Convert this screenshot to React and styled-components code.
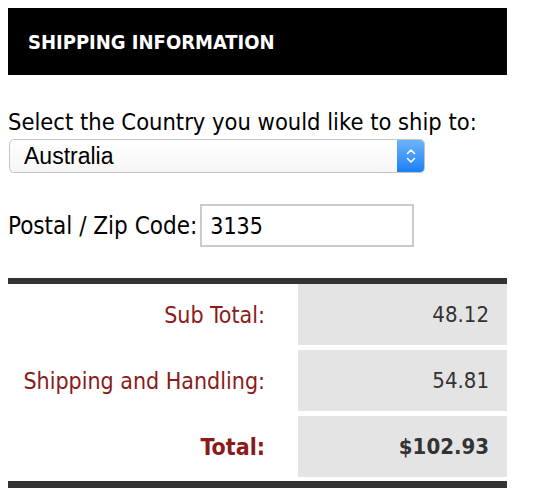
import styled, { createGlobalStyle } from 'styled-components';

const GlobalStyle = createGlobalStyle`
    body {
        margin: 8px;
        background: #fff;
        font-family: "DejaVu Sans Condensed", "DejaVu Sans", sans-serif;
    }
`;

const Panel = styled.div`
    width: 499px;
`;

const Header = styled.div`
    height: 67px;
    background-color: #000;
    color: #fff;
    display: flex;
    align-items: center;
    padding-left: 20px;
    font-size: 20px;
    font-weight: bold;
`;

const Label = styled.div`
    font-size: 23.5px;
    color: #000;
    margin-top: 33px;
    line-height: 28px;
`;

const SelectBox = styled.div`
    display: flex;
    width: 416px;
    height: 34px;
    box-sizing: border-box;
    margin-top: 3px;
    margin-left: 1px;
    border: 1px solid #c4c4c4;
    border-radius: 5px;
    overflow: hidden;
    background: linear-gradient(#fff, #f6f6f6);
`;

const Select = styled.select`
    flex: 1;
    appearance: none;
    border: none;
    background: transparent;
    font-family: "Liberation Sans", Arial, sans-serif;
    font-size: 23px;
    color: #000;
    padding: 0 0 0 14px;
    outline: none;
`;

const Stepper = styled.div`
    width: 27px;
    background: linear-gradient(#6db5fb, #1b7ff6);
    display: flex;
    align-items: center;
    justify-content: center;
`;

const ZipRow = styled.div`
    display: flex;
    align-items: center;
    margin-top: 31px;
    gap: 3px;
    font-size: 24px;
`;

const ZipInput = styled.input`
    width: 214px;
    height: 43px;
    box-sizing: border-box;
    border: 2px solid #cbcbcb;
    padding: 0 8px;
    font-family: inherit;
    font-size: 23px;
    color: #000;
    outline: none;
`;

const Totals = styled.div`
    margin-top: 31px;
    border-top: 6px solid #333;
    border-bottom: 7px solid #333;
    padding-bottom: 4px;
    display: grid;
    grid-template-columns: 290px 209px;
    row-gap: 5px;
`;

const Name = styled.div`
    height: 61px;
    display: flex;
    align-items: center;
    justify-content: flex-end;
    padding-right: 33px;
    color: #8b1a1a;
    font-size: 23px;
    font-weight: ${p => (p.$bold ? 'bold' : 'normal')};
`;

const Amount = styled.div`
    height: 61px;
    display: flex;
    align-items: center;
    justify-content: flex-end;
    padding-right: 18px;
    background-color: #e4e4e4;
    color: #333;
    font-size: 22px;
    font-weight: ${p => (p.$bold ? 'bold' : 'normal')};
`;

const rows = [
    { name: 'Sub Total:', value: '48.12' },
    { name: 'Shipping and Handling:', value: '54.81' },
    { name: 'Total:', value: '$102.93', bold: true },
];

const App = () => {
    return (
        <Panel>
            <GlobalStyle />
            <Header>SHIPPING INFORMATION</Header>
            <Label>Select the Country you would like to ship to:</Label>
            <SelectBox>
                <Select defaultValue="AU">
                    <option value="AU">Australia</option>
                    <option value="NZ">New Zealand</option>
                    <option value="US">United States</option>
                </Select>
                <Stepper>
                    <svg width="12" height="20" viewBox="0 0 12 20" fill="none" stroke="#fff" strokeWidth="1.6" strokeLinecap="round" strokeLinejoin="round">
                        <path d="M2.5 7.5 L6 4 L9.5 7.5" />
                        <path d="M2.5 12.5 L6 16 L9.5 12.5" />
                    </svg>
                </Stepper>
            </SelectBox>
            <ZipRow>
                <span>Postal / Zip Code:</span>
                <ZipInput defaultValue="3135" />
            </ZipRow>
            <Totals>
                {rows.map(r => (
                    <>
                        <Name key={r.name} $bold={r.bold}>{r.name}</Name>
                        <Amount key={r.value} $bold={r.bold}>{r.value}</Amount>
                    </>
                ))}
            </Totals>
        </Panel>
    );
};

export default App;
